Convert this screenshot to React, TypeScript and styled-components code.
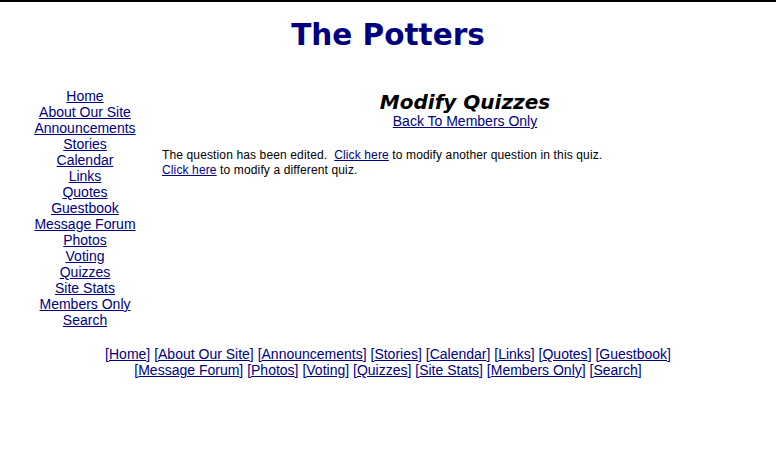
import React from "react";
import styled, { createGlobalStyle } from "styled-components";

const Global = createGlobalStyle`
  html, body { margin: 0; padding: 0; background: #ffffff; }
  body {
    border-top: 2px solid #000000;
    font-family: "Liberation Sans", Arial, sans-serif;
    color: #000000;
  }
`;

const Page = styled.div`
  padding: 0 8px;
`;

const Title = styled.h1`
  margin: 15px 0 0;
  text-align: center;
  font-family: "DejaVu Sans", Verdana, sans-serif;
  font-weight: bold;
  font-size: 29.5px;
  line-height: 36px;
  color: #000080;
`;

const Layout = styled.div`
  display: grid;
  grid-template-columns: 154px 1fr;
  margin-top: 35px;
`;

const SideNav = styled.nav`
  display: flex;
  flex-direction: column;
  align-items: center;
`;

const NavLink = styled.a`
  font-size: 14px;
  line-height: 16px;
  color: #000080;
  text-decoration: underline;
`;

const Main = styled.main`
  display: flex;
  flex-direction: column;
`;

const Heading = styled.h2`
  margin: 3px 0 0;
  text-align: center;
  font-family: "DejaVu Sans", Verdana, sans-serif;
  font-style: italic;
  font-weight: bold;
  font-size: 20px;
  line-height: 22px;
  color: #000000;
`;

const BackLink = styled.a`
  align-self: center;
  font-size: 14px;
  line-height: 16px;
  color: #000080;
  text-decoration: underline;
`;

const Message = styled.p`
  margin: 19px 0 0;
  font-size: 12px;
  line-height: 15px;
  letter-spacing: 0.13px;
  white-space: pre-wrap;
`;

const InlineLink = styled.a`
  color: #000080;
  text-decoration: underline;
`;

const Footer = styled.div`
  margin-top: 18px;
  text-align: center;
  font-size: 14px;
  line-height: 16px;
  color: #000080;
`;

const FooterLine = styled.div``;

const items = [
  "Home",
  "About Our Site",
  "Announcements",
  "Stories",
  "Calendar",
  "Links",
  "Quotes",
  "Guestbook",
  "Message Forum",
  "Photos",
  "Voting",
  "Quizzes",
  "Site Stats",
  "Members Only",
  "Search",
];

const FooterItems = ({ list }: { list: string[] }) => (
  <FooterLine>
    {list.map((item, i) => (
      <React.Fragment key={item}>
        {i > 0 ? " " : ""}[<InlineLink href="#">{item}</InlineLink>]
      </React.Fragment>
    ))}
  </FooterLine>
);

export default function App() {
  return (
    <>
      <Global />
      <Page>
        <Title>The Potters</Title>
        <Layout>
          <SideNav>
            {items.map((item) => (
              <NavLink key={item} href="#">
                {item}
              </NavLink>
            ))}
          </SideNav>
          <Main>
            <Heading>Modify Quizzes</Heading>
            <BackLink href="#">Back To Members Only</BackLink>
            <Message>
              The question has been edited.{"  "}
              <InlineLink href="#">Click here</InlineLink> to modify another question in this quiz.
              <br />
              <InlineLink href="#">Click here</InlineLink> to modify a different quiz.
            </Message>
          </Main>
        </Layout>
        <Footer>
          <FooterItems list={items.slice(0, 8)} />
          <FooterItems list={items.slice(8)} />
        </Footer>
      </Page>
    </>
  );
}
